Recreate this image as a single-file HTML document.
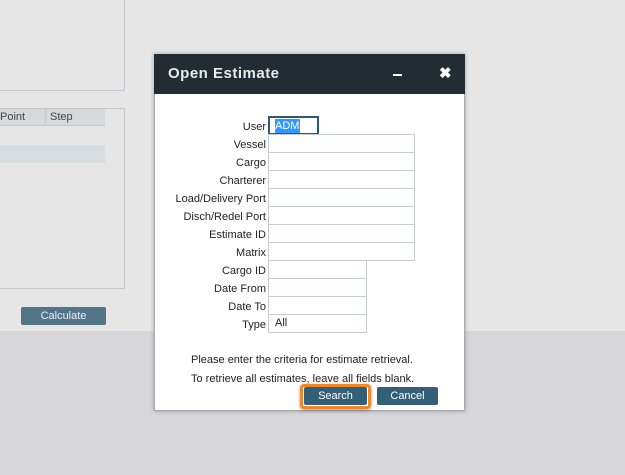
<!DOCTYPE html><html><head><style>
body{margin:0;width:625px;height:475px;background:#d6d6db;position:relative;overflow:hidden;font-family:"Liberation Sans",sans-serif;font-size:11px;color:#222}
div{position:absolute;box-sizing:border-box}
.top{left:0;top:0;width:625px;height:331px;background:#e6e6e6}
.lab{width:112px;left:154px;text-align:right;height:18px;line-height:20px;font-size:11px}
.in{left:268px;width:147px;height:19px;border:1px solid #c5ccd3;background:#fff;padding-left:6px;line-height:17px}
.btn{height:18px;background:#335f78;color:#fff;text-align:center;line-height:18px;font-size:11px;border-radius:2px}
</style></head><body>
<div class="top"></div>
<div style="left:-2px;top:-2px;width:127px;height:93px;border:1px solid #c4c6ca"></div>
<div style="left:-2px;top:108px;width:127px;height:181px;border:1px solid #c4c6ca"></div>
<div style="left:0;top:109px;width:105px;height:17px;background:#d7d8dc;border-bottom:1px solid #c4c6ca"></div>
<div style="left:45px;top:109px;width:1px;height:17px;background:#c4c6ca"></div>
<div style="left:0;top:109px;height:17px;line-height:17px;color:#444">Point</div>
<div style="left:50px;top:109px;height:17px;line-height:17px;color:#444">Step</div>
<div style="left:0;top:145px;width:105px;height:18px;background:#d6dcdf"></div>
<div class="btn" style="left:21px;top:307px;width:85px;height:18px;background:#537587;color:#eef">Calculate</div>

<div style="left:154px;top:54px;width:311px;height:357px;background:#fff;border:1px solid #aaa;box-shadow:0 0 4px rgba(0,0,0,.3)"></div>
<div style="left:154px;top:54px;width:311px;height:40px;background:#232c33;color:#e8ecef;font-weight:bold;font-size:15px;line-height:40px;padding-left:14px;letter-spacing:.5px">Open Estimate</div>
<div style="left:393px;top:74px;width:9px;height:2px;background:#fff"></div>
<div style="left:439px;top:64px;color:#fff;font-size:15px;font-weight:bold;line-height:20px">✖</div>

<div class="lab" style="top:117px">User</div>
<div style="left:268px;top:116px;width:51px;height:19px;border:2px solid #2e5a70;background:#fff"><span style="position:absolute;left:5px;top:1px;background:#3399ff;color:#fff;line-height:14px;padding-right:1px">ADM</span></div>
<div class="lab" style="top:135px">Vessel</div><div class="in" style="top:134px"></div>
<div class="lab" style="top:153px">Cargo</div><div class="in" style="top:152px"></div>
<div class="lab" style="top:171px">Charterer</div><div class="in" style="top:170px"></div>
<div class="lab" style="top:189px">Load/Delivery Port</div><div class="in" style="top:188px"></div>
<div class="lab" style="top:207px">Disch/Redel Port</div><div class="in" style="top:206px"></div>
<div class="lab" style="top:225px">Estimate ID</div><div class="in" style="top:224px"></div>
<div class="lab" style="top:243px">Matrix</div><div class="in" style="top:242px"></div>
<div class="lab" style="top:261px">Cargo ID</div><div class="in" style="top:260px;width:99px"></div>
<div class="lab" style="top:279px">Date From</div><div class="in" style="top:278px;width:99px"></div>
<div class="lab" style="top:297px">Date To</div><div class="in" style="top:296px;width:99px"></div>
<div class="lab" style="top:315px">Type</div><div class="in" style="top:314px;width:99px;height:19px">All</div>

<div style="left:191px;top:353px;line-height:14px">Please enter the criteria for estimate retrieval.</div>
<div style="left:191px;top:372px;line-height:14px">To retrieve all estimates, leave all fields blank.</div>
<div style="left:300px;top:384px;width:71px;height:25px;border:3px solid #f0882a;border-radius:4px;box-shadow:0 1px 3px rgba(0,0,0,.4)"></div>
<div class="btn" style="left:304px;top:387px;width:63px">Search</div>
<div class="btn" style="left:377px;top:387px;width:61px">Cancel</div>
</body></html>
